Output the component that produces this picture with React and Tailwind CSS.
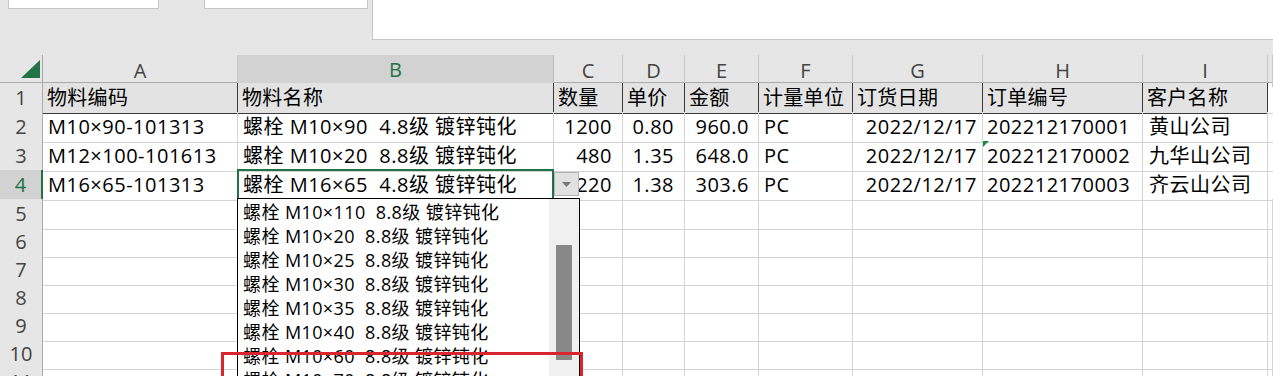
import React from 'react'

const COLS = 'grid grid-cols-[43px_195px_316px_69px_62px_74px_94px_130px_160px_125px_1fr]'
const LETTERS = ['A', 'B', 'C', 'D', 'E', 'F', 'G', 'H', 'I', '']

const HEAD = ['物料编码', '物料名称', '数量', '单价', '金额', '计量单位', '订货日期', '订单编号', '客户名称']

const ROWS = [
  ['M10×90-101313', '螺栓 M10×90  4.8级 镀锌钝化', '1200', '0.80', '960.0', 'PC', '2022/12/17', '202212170001', '黄山公司'],
  ['M12×100-101613', '螺栓 M10×20  8.8级 镀锌钝化', '480', '1.35', '648.0', 'PC', '2022/12/17', '202212170002', '九华山公司'],
  ['M16×65-101313', '螺栓 M16×65  4.8级 镀锌钝化', '220', '1.38', '303.6', 'PC', '2022/12/17', '202212170003', '齐云山公司'],
]

const LIST = ['110', '20', '25', '30', '35', '40', '60', '70']

// alignment + padding per column
const ALIGN = [
  'justify-start pl-[5px]',
  'justify-start pl-[5px]',
  'justify-end pr-[10px]',
  'justify-end pr-[10px]',
  'justify-end pr-[9px]',
  'justify-start pl-[5px]',
  'justify-end pr-[5px]',
  'justify-start pl-[4px]',
  'justify-start pl-[6px]',
]

function RowNum({ n, active }) {
  return (
    <div className={active
      ? 'flex items-center justify-center bg-[#d2d2d2] text-[#217346] border-r-2 border-r-[#217346] border-b border-b-[#c8c8c8]'
      : 'flex items-center justify-center bg-[#e6e6e6] text-[#444] border-r border-r-[#ababab] border-b border-b-[#c8c8c8]'}>
      {n}
    </div>
  )
}

export default function App() {
  return (
    <div className="w-[1273px] h-[376px] overflow-hidden bg-white [font-family:'Open_Sans','Noto_Sans_CJK_SC',sans-serif] text-[20px] text-black">
      {/* formula bar strip */}
      <div className="flex items-start h-[55px] bg-[#e6e6e6]">
        <div className="ml-[8px] w-[151px] h-[9px] bg-white border border-t-0 border-[#c6c6c6]" />
        <div className="ml-[45px] w-[164px] h-[9px] bg-white border border-t-0 border-[#c6c6c6]" />
        <div className="ml-[4px] flex-1 h-[40px] bg-white border-l border-b border-[#c6c6c6]" />
      </div>

      <div className="relative">
        {/* column headers */}
        <div className={`${COLS} h-[28px] bg-[#e6e6e6] border-b border-[#ababab]`}>
          <div className="relative border-r border-[#ababab]">
            <svg width="43" height="27" className="absolute left-0 top-0">
              <polygon points="40,5 40,23 21,23" fill="#217346" />
            </svg>
          </div>
          {LETTERS.map((l, i) => (
            <div key={i} className={l === 'B'
              ? 'flex items-center justify-center bg-[#d2d2d2] text-[#217346] border-r border-[#bdbdbd] border-b-2 border-b-[#217346]'
              : 'flex items-center justify-center text-[#444] border-r border-[#c8c8c8]'}>
              {l}
            </div>
          ))}
        </div>

        {/* row 1 */}
        <div className={`${COLS} h-[29px]`}>
          <RowNum n={1} />
          {HEAD.map((h, i) => (
            <div key={i} className="flex items-center pl-[4px] bg-[#e3e3e3] border-r border-b border-[#3a3a3a] whitespace-pre tracking-[0.3px]">
              {h}
            </div>
          ))}
          <div className="border-b border-[#d4d4d4]" />
        </div>

        {/* rows 2-4 */}
        {ROWS.map((r, ri) => (
          <div key={ri} className={`${COLS} h-[29px]`}>
            <RowNum n={ri + 2} active={ri === 2} />
            {r.map((v, i) => (
              <div key={i} className={`relative flex items-center ${ALIGN[i]} border-r border-b border-[#d4d4d4] whitespace-pre tracking-[0.5px]`}>
                {ri === 1 && i === 7 && (
                  <span className="absolute left-0 top-0 w-0 h-0 border-t-[6px] border-t-[#1f8a3c] border-r-[6px] border-r-transparent" />
                )}
                {v}
                {ri === 2 && i === 1 && (
                  <>
                    <div className="absolute -left-px -top-px -right-px -bottom-px border-2 border-[#217346] z-10" />
                    <div className="absolute -right-[4px] -bottom-[4px] w-[6px] h-[6px] bg-[#217346] border border-white z-20" />
                    <div className="absolute left-[316px] top-[2px] w-[25px] h-[24px] bg-[#e1e1e1] border border-[#b4b4b4] flex items-center justify-center z-20">
                      <svg width="9" height="5"><polygon points="0,0 9,0 4.5,5" fill="#777" /></svg>
                    </div>
                  </>
                )}
              </div>
            ))}
            <div className="border-b border-[#d4d4d4]" />
          </div>
        ))}

        {/* empty rows 5-11 */}
        {[5, 6, 7, 8, 9, 10, 11].map(n => (
          <div key={n} className={`${COLS} h-[28px]`}>
            <RowNum n={n} />
            {Array.from({ length: 10 }).map((_, i) => (
              <div key={i} className="border-r border-b border-[#d4d4d4]" />
            ))}
          </div>
        ))}

        {/* validation dropdown */}
        <div className="absolute left-[237px] top-[143px] w-[343px] h-[240px] bg-white border border-black flex z-30">
          <div className="flex-1 flex flex-col text-[18px] leading-[24px] pt-[1px] tracking-[0.4px]">
            {LIST.map(s => (
              <div key={s} className="pl-[5px] whitespace-pre">{`螺栓 M10×${s}  8.8级 镀锌钝化`}</div>
            ))}
          </div>
          <div className="w-[30px] bg-[#f0f0f0] pt-[46px] flex justify-center">
            <div className="w-[16px] h-[115px] bg-[#888]" />
          </div>
        </div>

        {/* red highlight */}
        <div className="absolute left-[221px] top-[297px] w-[362px] h-[60px] border-[3px] border-[#d9262e] z-40" />
      </div>
    </div>
  )
}
